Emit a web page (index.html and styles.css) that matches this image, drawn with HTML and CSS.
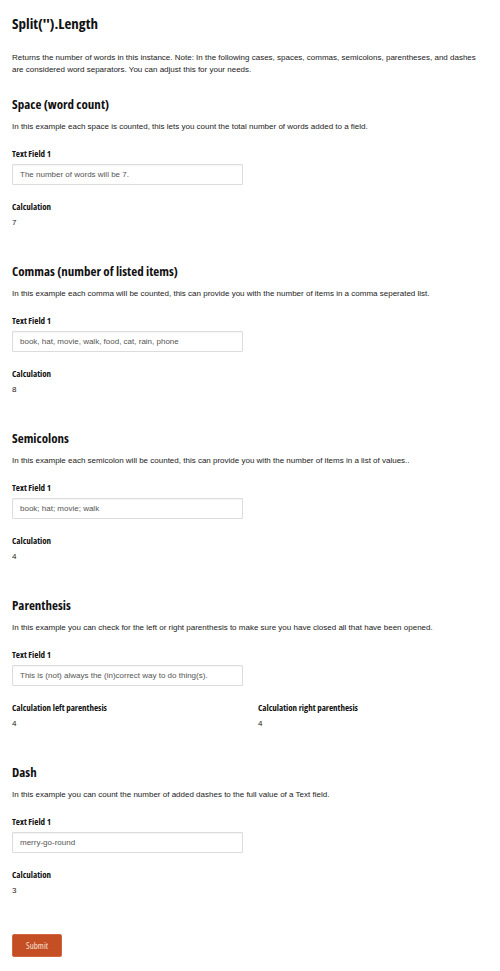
FILE: index.html
```html
<!DOCTYPE html>
<html>
<head>
<meta charset="utf-8">
<link rel="stylesheet" href="styles.css">
</head>
<body>
<div class="page">
  <h1 class="title">Split('').Length</h1>
  <p class="intro">Returns the number of words in this instance. Note: In the following cases, spaces, commas, semicolons, parentheses, and dashes are considered word separators. You can adjust this for your needs.</p>

  <section class="section">
    <h2 class="heading">Space (word count)</h2>
    <p class="desc">In this example each space is counted, this lets you count the total number of words added to a field.</p>
    <div class="field">
      <label class="label">Text Field 1</label>
      <div class="input">The number of words will be 7.</div>
    </div>
    <div class="calc">
      <div class="label">Calculation</div>
      <div class="value">7</div>
    </div>
  </section>

  <section class="section">
    <h2 class="heading">Commas (number of listed items)</h2>
    <p class="desc">In this example each comma will be counted, this can provide you with the number of items in a comma seperated list.</p>
    <div class="field">
      <label class="label">Text Field 1</label>
      <div class="input">book, hat, movie, walk, food, cat, rain, phone</div>
    </div>
    <div class="calc">
      <div class="label">Calculation</div>
      <div class="value">8</div>
    </div>
  </section>

  <section class="section">
    <h2 class="heading">Semicolons</h2>
    <p class="desc">In this example each semicolon will be counted, this can provide you with the number of items in a list of values..</p>
    <div class="field">
      <label class="label">Text Field 1</label>
      <div class="input">book; hat; movie; walk</div>
    </div>
    <div class="calc">
      <div class="label">Calculation</div>
      <div class="value">4</div>
    </div>
  </section>

  <section class="section">
    <h2 class="heading">Parenthesis</h2>
    <p class="desc">In this example you can check for the left or right parenthesis to make sure you have closed all that have been opened.</p>
    <div class="field">
      <label class="label">Text Field 1</label>
      <div class="input">This is (not) always the (in)correct way to do thing(s).</div>
    </div>
    <div class="calc-row">
      <div class="calc">
        <div class="label">Calculation left parenthesis</div>
        <div class="value">4</div>
      </div>
      <div class="calc">
        <div class="label">Calculation right parenthesis</div>
        <div class="value">4</div>
      </div>
    </div>
  </section>

  <section class="section">
    <h2 class="heading">Dash</h2>
    <p class="desc">In this example you can count the number of added dashes to the full value of a Text field.</p>
    <div class="field">
      <label class="label">Text Field 1</label>
      <div class="input">merry-go-round</div>
    </div>
    <div class="calc">
      <div class="label">Calculation</div>
      <div class="value">3</div>
    </div>
  </section>

  <button class="submit">Submit</button>
</div>
</body>
</html>
```

FILE: styles.css
```css
html, body {
  margin: 0;
  padding: 0;
  background: #ffffff;
}
.page {
  padding: 13px 12px 0 12px;
  font-family: "Liberation Sans", Arial, sans-serif;
  color: #222;
}
.title {
  margin: 0;
  font-family: "Open Sans", sans-serif;
  font-stretch: 75%;
  font-weight: 700;
  font-size: 15px;
  line-height: 20px;
  color: #111;
}
.intro {
  margin: 19px 0 0 0;
  font-size: 8px;
  line-height: 12px;
}
.section {
  margin-top: 20px;
}
.section + .section {
  margin-top: 34px;
}
.heading {
  margin: 0;
  font-family: "Open Sans", sans-serif;
  font-stretch: 75%;
  font-weight: 700;
  font-size: 13px;
  line-height: 16px;
  color: #111;
}
.desc {
  margin: 9px 0 0 0;
  font-size: 8px;
  line-height: 12px;
}
.field {
  margin-top: 15px;
}
.label {
  display: block;
  font-family: "Open Sans", sans-serif;
  font-stretch: 75%;
  font-weight: 700;
  font-size: 9px;
  line-height: 12px;
  color: #111;
}
.input {
  margin-top: 4px;
  width: 231px;
  height: 21px;
  box-sizing: border-box;
  border: 1px solid #dcdcdc;
  border-radius: 1px;
  padding: 0 7px;
  font-size: 8px;
  line-height: 19px;
  color: #555;
  box-shadow: inset 0 1px 1px rgba(0,0,0,0.04);
}
.calc {
  margin-top: 16px;
}
.value {
  margin-top: 4px;
  font-size: 8px;
  line-height: 12px;
}
.calc-row {
  display: grid;
  grid-template-columns: 238px 238px;
  column-gap: 8px;
}
.submit {
  margin-top: 37px;
  width: 50px;
  height: 23px;
  border: 1px solid #d2673f;
  border-radius: 2px;
  background: #c54f24;
  color: #f6e2d8;
  font-family: "Open Sans", sans-serif;
  font-stretch: 75%;
  font-size: 9px;
  padding: 0;
  display: block;
}
```
